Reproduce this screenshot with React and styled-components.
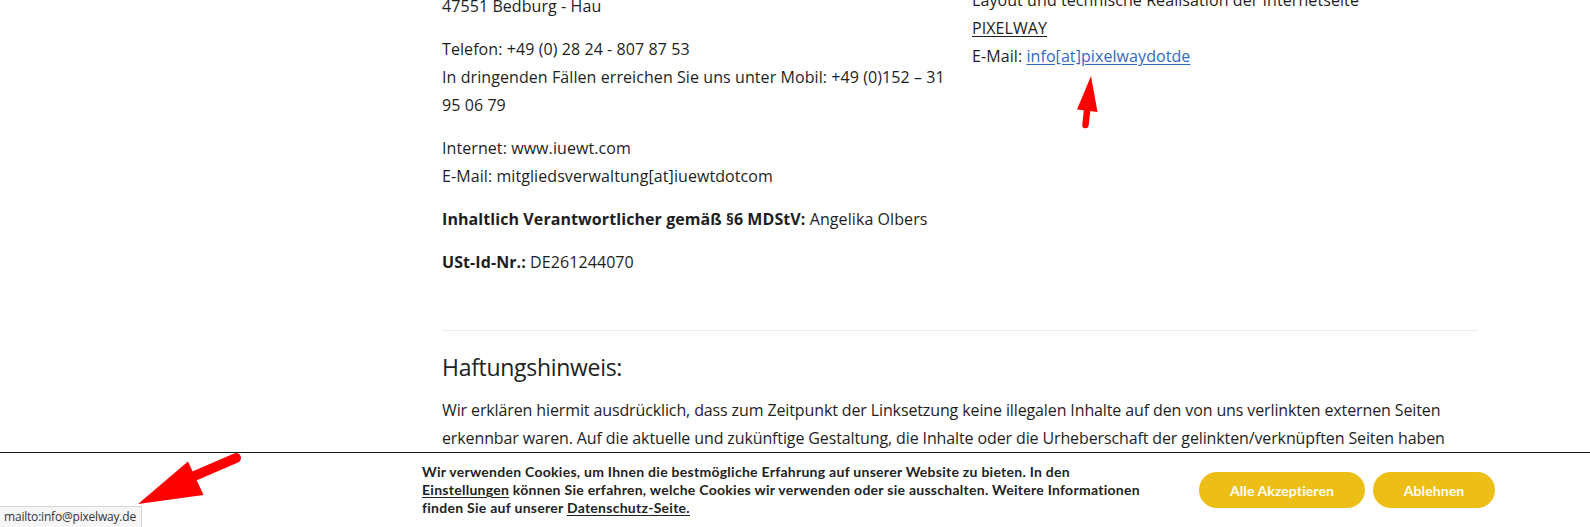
import React from "react";
import styled, { createGlobalStyle } from "styled-components";

const Global = createGlobalStyle`
  html, body { margin: 0; padding: 0; background: #fff; overflow: hidden; }
  body { font-family: "Open Sans", "Noto Sans", sans-serif; color: #1e1e1e; }
  * { box-sizing: border-box; }
`;

const Page = styled.main`
  width: 1590px;
  height: 527px;
  overflow: hidden;
  padding-left: 442px;
`;

const Content = styled.div`
  width: 1036px;
  margin-top: -14px;
`;

const Columns = styled.div`
  display: grid;
  grid-template-columns: 505px 506px;
  column-gap: 25px;
`;

const Column = styled.div`
  padding-top: ${(p) => p.$offset || 0}px;
`;

const Para = styled.p`
  margin: 0 0 15px;
  font-size: 16px;
  line-height: 28px;
  letter-spacing: ${(p) => (p.$tight ? "-0.12px" : "0.08px")};
`;

const Strong = styled.strong`
  font-weight: 700;
`;

const Plain = styled.span`
  text-decoration: underline;
  text-underline-offset: 2px;
`;

const Link = styled.a`
  color: #3169c2;
  text-decoration: underline;
  text-underline-offset: 2px;
`;

const Divider = styled.hr`
  margin: 39px 0 0;
  border: 0;
  border-top: 1px solid #ebebeb;
`;

const Heading = styled.h3`
  margin: 21px 0 14px;
  font-size: 23px;
  line-height: 30px;
  font-weight: 400;
  letter-spacing: -0.3px;
  color: #222;
`;

const CookieBar = styled.div`
  position: fixed;
  left: 0;
  right: 0;
  bottom: 0;
  height: 75px;
  background: #fff;
  border-top: 1px solid #1a1a1a;
  display: flex;
  align-items: center;
  padding: 0 95px 0 422px;
  font-family: "Lato", "Open Sans", sans-serif;
`;

const CookieText = styled.p`
  margin: 0;
  width: 720px;
  font-size: 14px;
  line-height: 18px;
  font-weight: 700;
  color: #222;
  letter-spacing: 0.27px;
`;

const CookieLink = styled.a`
  color: #222;
  text-decoration: underline;
  text-underline-offset: 2px;
`;

const Buttons = styled.div`
  margin-left: auto;
  display: flex;
  gap: 8px;
`;

const Button = styled.button`
  height: 36px;
  width: ${(p) => p.$w}px;
  border: 0;
  border-radius: 18px;
  background: #edbe16;
  color: #fff;
  font-family: "Lato", "Open Sans", sans-serif;
  font-size: 14px;
  font-weight: 700;
  letter-spacing: 0.1px;
  cursor: pointer;
`;

const StatusBox = styled.div`
  position: fixed;
  left: 0;
  bottom: 0;
  height: 21px;
  padding: 0 5px 0 4px;
  background: #f6f6f6;
  border-top: 1px solid #d6d6d6;
  border-right: 1px solid #d6d6d6;
  font-family: "Open Sans", "Noto Sans", sans-serif;
  font-size: 12px;
  line-height: 20px;
  color: #333;
  letter-spacing: -0.2px;
`;

const Overlay = styled.svg`
  position: fixed;
  left: 0;
  top: 0;
  pointer-events: none;
`;

export default function App() {
  return (
    <>
      <Global />
      <Page>
        <Content>
          <Columns>
            <Column $offset={6}>
              <Para>47551 Bedburg - Hau</Para>
              <Para>
                Telefon: +49 (0) 28 24 - 807 87 53
                <br />
                In dringenden Fällen erreichen Sie uns unter Mobil: +49 (0)152 – 31 95 06 79
              </Para>
              <Para>
                Internet: www.iuewt.com
                <br />
                E-Mail: mitgliedsverwaltung[at]iuewtdotcom
              </Para>
              <Para>
                <Strong>Inhaltlich Verantwortlicher gemäß §6 MDStV:</Strong> Angelika Olbers
              </Para>
              <Para>
                <Strong>USt-Id-Nr.:</Strong> DE261244070
              </Para>
            </Column>
            <Column>
              <Para>
                Layout und technische Realisation der Internetseite
                <br />
                <Plain>PIXELWAY</Plain>
                <br />
                E-Mail: <Link href="mailto:info@pixelway.de">info[at]pixelwaydotde</Link>
              </Para>
            </Column>
          </Columns>
          <Divider />
          <Heading>Haftungshinweis:</Heading>
          <Para $tight>
            Wir erklären hiermit ausdrücklich, dass zum Zeitpunkt der Linksetzung keine illegalen Inhalte auf den
            von uns verlinkten externen Seiten
            <br />
            erkennbar waren. Auf die aktuelle und zukünftige Gestaltung, die Inhalte oder die Urheberschaft der
            gelinkten/verknüpften Seiten haben
            <br />
            wir keinerlei Einfluss. Deshalb distanzieren wir uns hiermit ausdrücklich von allen Inhalten aller
            verlinkten /verknüpften Seiten, die nach der Linksetzung verändert wurden.
          </Para>
        </Content>
      </Page>
      <CookieBar>
        <CookieText>
          Wir verwenden Cookies, um Ihnen die bestmögliche Erfahrung auf unserer Website zu bieten. In den{" "}
          <CookieLink href="#">Einstellungen</CookieLink> können Sie erfahren, welche Cookies wir verwenden oder
          sie ausschalten. Weitere Informationen finden Sie auf unserer{" "}
          <CookieLink href="#">Datenschutz-Seite.</CookieLink>
        </CookieText>
        <Buttons>
          <Button $w={166}>Alle Akzeptieren</Button>
          <Button $w={122}>Ablehnen</Button>
        </Buttons>
      </CookieBar>
      <StatusBox>mailto:info@pixelway.de</StatusBox>
      <Overlay width="1590" height="527" viewBox="0 0 1590 527">
        <line x1="1087.5" y1="106" x2="1085.5" y2="125" stroke="#ff0000" strokeWidth="6.5" strokeLinecap="round" />
        <polygon points="1091,76 1077,109.5 1097.5,112" fill="#ff0000" />
        <line x1="236" y1="458" x2="192" y2="477" stroke="#ff0000" strokeWidth="10" strokeLinecap="round" />
        <polygon points="138,504 188,461.5 203.5,495" fill="#ff0000" />
      </Overlay>
    </>
  );
}
